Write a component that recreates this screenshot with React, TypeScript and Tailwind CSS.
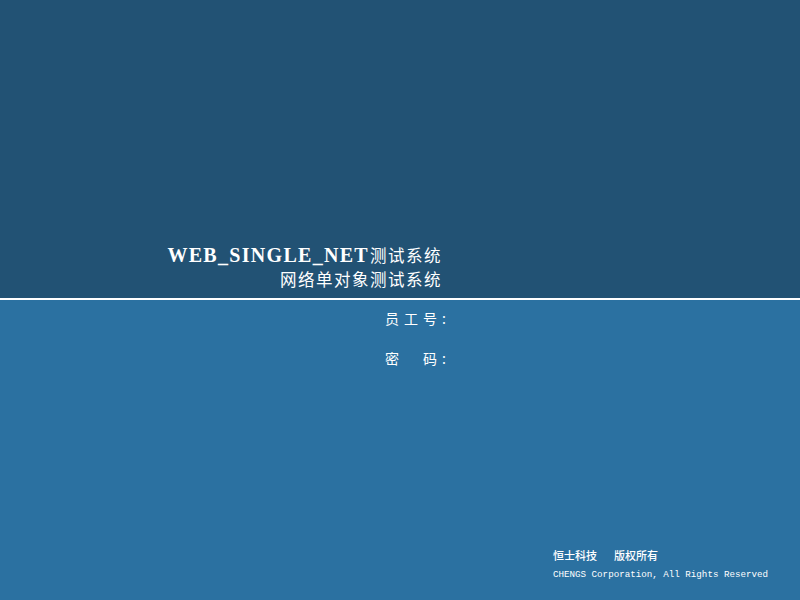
export default function App() {
  return (
    <div className="w-[800px] h-[600px] flex flex-col bg-[#2b71a1] text-white overflow-hidden">
      {/* top band with the system name */}
      <div className="h-[298px] bg-[#225274] flex flex-col items-end justify-end pr-[358px] pb-[7px]">
        <div className="flex items-end leading-[24px]">
          <span className="font-['Liberation_Serif',serif] font-bold text-[20px] tracking-[1.3px] mr-[1px]">WEB_SINGLE_NET</span>
          <span className="font-['Noto_Sans_CJK_SC',sans-serif] text-[16.5px] tracking-[1.5px]">测试系统</span>
        </div>
        <div className="font-['Noto_Sans_CJK_SC',sans-serif] text-[16.5px] tracking-[1.5px] leading-[24px]">网络单对象测试系统</div>
      </div>
      <div className="h-[2px] bg-white" />

      {/* login fields */}
      <div className="pl-[385px] pt-[7px] flex flex-col gap-[18px] font-['Noto_Sans_CJK_SC',sans-serif] text-[14px] leading-[22px]">
        <div>
          <span className="tracking-[5px]">员工号</span>:
        </div>
        <div>
          <span className="tracking-[5px]">密　码</span>:
        </div>
      </div>

      <div className="flex-1" />

      {/* footer */}
      <div className="pl-[553px] pb-[18px] flex flex-col gap-[6px]">
        <div className="font-['Noto_Sans_CJK_SC',sans-serif] text-[11px] leading-[14px] font-medium">
          <span className="mr-[17px]">恒士科技</span>
          <span>版权所有</span>
        </div>
        <div className="font-['Liberation_Mono',monospace] text-[9.2px] leading-[14px]">
          CHENGS Corporation, All Rights Reserved
        </div>
      </div>
    </div>
  );
}
